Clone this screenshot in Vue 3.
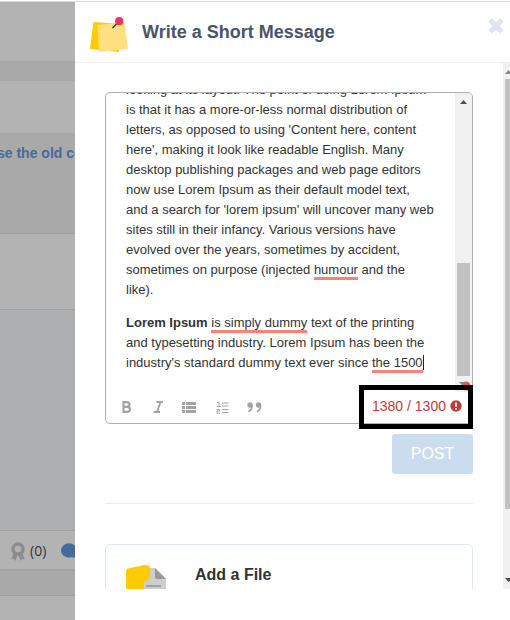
<script setup>
const lines = [
  'looking at its layout. The point of using Lorem Ipsum',
  'is that it has a more-or-less normal distribution of',
  "letters, as opposed to using 'Content here, content",
  "here', making it look like readable English. Many",
  'desktop publishing packages and web page editors',
  'now use Lorem Ipsum as their default model text,',
  "and a search for 'lorem ipsum' will uncover many web",
  'sites still in their infancy. Various versions have',
  'evolved over the years, sometimes by accident,',
]
</script>

<template>
  <div class="screen">
    <div class="topline"></div>
    <div class="columns">
      <aside class="backdrop">
        <div class="band b1"></div>
        <div class="band b2"></div>
        <div class="band b3"></div>
        <div class="band b4"><span class="link">se the old co</span></div>
        <div class="band b5"></div>
        <div class="band b6"></div>
        <div class="band b7">
          <svg class="award" width="14" height="19" viewBox="0 0 14 19">
            <path d="M3 11 0 17.200 2.600 16.800 4.200 19 6.500 13.500ZM11 11 14 17.200 11.400 16.800 9.800 19 7.500 13.500Z" fill="#8d8d8d" />
            <circle cx="7" cy="7" r="5" fill="none" stroke="#8d8d8d" stroke-width="3.500" />
          </svg>
          <span class="count">(0)</span>
          <svg class="chat" width="20" height="17" viewBox="0 0 20 17">
            <ellipse cx="8" cy="8.500" rx="8" ry="7.200" fill="#446b9c" />
            <path d="M12 11 16 15.500 11 15.500Z" fill="#446b9c" />
          </svg>
        </div>
        <div class="band b8"></div>
        <div class="band b9"></div>
      </aside>
      <section class="modal">
        <header class="head">
          <svg class="note" width="39" height="36" viewBox="0 0 39 36">
            <path d="M3.500 5 32 7 29 35 0 32Z" fill="#ffcb05" />
            <path d="M7.500 8 34.500 5.500 38 32 9 35Z" fill="#ffdf80" />
            <path d="M22.500 11 28 5.500" stroke="#333" stroke-width="1.500" />
            <circle cx="29.200" cy="4.200" r="4.100" fill="#eb3465" />
          </svg>
          <h1>Write a Short Message</h1>
          <svg class="close" width="16" height="16" viewBox="0 0 16 16">
            <path d="M2 2 14 14M14 2 2 14" stroke="#dfe4f2" stroke-width="4.600" />
          </svg>
        </header>
        <div class="body">
          <main class="content">
            <div class="editor">
              <div class="scroller">
                <div class="text">
                  <p>
                    <span v-for="l in lines" :key="l" class="line">{{ l }}</span>
                    <span class="line">sometimes on purpose (injected <u>humour</u> and the</span>
                    <span class="line">like).</span>
                  </p>
                  <p>
                    <span class="line"><b>Lorem Ipsum</b> <u>is simply dummy</u> text of the printing</span>
                    <span class="line">and typesetting industry. Lorem Ipsum has been the</span>
                    <span class="line">industry's standard dummy text ever since <u>the 1500</u><i class="caret"></i></span>
                  </p>
                </div>
                <div class="innerbar">
                  <svg class="up" width="7" height="4" viewBox="0 0 7 4"><path d="M0 4 3.500 0 7 4Z" fill="#505050" /></svg>
                  <div class="innerthumb"></div>
                  <svg class="down" width="12" height="10" viewBox="0 0 12 10">
                    <circle cx="8" cy="5" r="4.500" fill="#ec4b4b" />
                    <path d="M1 1H9L5 5Z" fill="#858585" />
                  </svg>
                </div>
              </div>
              <div class="tools">
                <svg width="150" height="14" viewBox="0 0 150 14" fill="none" stroke="#a3a3a3">
                  <path d="M2.500 2.200V11.800H5.800Q9 11.800 9 9.200 9 7 6 6.800 8.500 6.500 8.500 4.500 8.500 2.200 5.800 2.200ZM2.500 6.800H6" stroke-width="2.200" />
                  <path d="M35.500 2H42M32.500 12H39M39.500 2 36 12" stroke-width="1.900" />
                  <path d="M61 3.500H64M61 7.500H64M61 11.500H64M65 3.500H75M65 7.500H75M65 11.500H75" stroke-width="2.800" />
                  <path d="M96 2.500H98V6.500M96 6.500H100M95.500 9.500H98.500V11H96V13.200H99M101 3H107.500M101 6H107.500M101 9.500H107.500M101 12.500H107.500" stroke-width="1" />
                  <g fill="#a3a3a3" stroke="none">
                    <circle cx="129" cy="5" r="2.700" /><circle cx="137.500" cy="5" r="2.700" />
                  </g>
                  <path d="M131 5Q131 10 127.500 11.800M139.500 5Q139.500 10 136 11.800" stroke-width="1.800" />
                </svg>
              </div>
              <div class="limit">
                <span>1380 / 1300</span>
                <svg width="12" height="12" viewBox="0 0 12 12">
                  <circle cx="6" cy="6" r="5.700" fill="#bb3d3d" />
                  <path d="M6 2.500V6.700M6 7.900V9.500" stroke="#fff" stroke-width="1.700" />
                </svg>
              </div>
            </div>
            <button class="post">POST</button>
            <div class="rule"></div>
            <div class="card">
              <svg class="file" width="41" height="40" viewBox="0 0 41 40">
                <path d="M18 3H29L40 14V40H18Z" fill="#cecece" />
                <path d="M29 3 40 14H31Q29 14 29 12Z" fill="#999" />
                <path d="M20 21H35" stroke="#999" stroke-width="1.600" />
                <path d="M0 40V6Q0 4 2 3.500L17 .3Q24-.8 24 3V11Q24 14 21 15 18 16 18 19V40Z" fill="#ffcb05" />
              </svg>
              <h2>Add a File</h2>
            </div>
          </main>
          <div class="outerbar">
            <svg width="7" height="4" viewBox="0 0 7 4"><path d="M0 4 3.500 0 7 4Z" fill="#858585" /></svg>
            <div class="outerthumb"></div>
            <svg class="end" width="7" height="4" viewBox="0 0 7 4"><path d="M0 0H7L3.500 4Z" fill="#505050" /></svg>
          </div>
        </div>
      </section>
    </div>
  </div>
</template>

<style>
body { margin: 0; overflow: hidden; background: #fff; }
</style>

<style scoped>
* { box-sizing: border-box; }
.screen { width: 510px; height: 620px; overflow: hidden; font-family: "Liberation Sans", Arial, sans-serif; color: #333; }
.topline { height: 2px; border-bottom: 1px solid #d9dada; }
.columns { display: flex; height: 618px; }
.backdrop { width: 75px; overflow: hidden; flex: none; }
.band { background: #b3b3b3; white-space: nowrap; }
.b1 { height: 59px; }
.b2 { height: 20px; background: #a9a9a9; }
.b3 { height: 52px; }
.b4 { height: 101px; background: #a9a9a9; border-bottom: 1px solid #9fa0a1; padding-top: 12px; }
.link { font-size: 14px; line-height: 17px; font-weight: bold; color: #446b9c; display: block; margin-left: -3px; }
.b5 { height: 76px; border-bottom: 1px solid #9fa1a3; }
.b6 { height: 221px; background: #adafb1; border-bottom: 1px solid #9fa1a3; }
.b7 { height: 40px; border-bottom: 2px solid #a1a2a3; display: flex; padding: 11px 0 0 11px; }
.count { font: 14px/18px "Open Sans", sans-serif; margin-left: 5px; width: 31px; flex: none; }
.award, .chat { flex: none; }
.b8 { height: 25px; background: #a9a9a9; border-bottom: 1px solid #9fa0a1; }
.b9 { height: 24px; }
.modal { width: 435px; background: #fff; }
.head { height: 61px; border-bottom: 1px solid #efefef; display: flex; padding: 15px 6px 0 15px; }
.head h1 { margin: 4px 0 0 13px; font-size: 18px; line-height: 22px; color: #4a5469; flex: 1; white-space: nowrap; }
.close { margin-top: 1px; }
.body { height: 526px; display: flex; overflow: hidden; }
.content { width: 428px; padding: 29px 30px 0 30px; display: flex; flex-direction: column; flex: none; }
.editor { height: 332px; border: 1px solid #afafaf; border-radius: 5px; position: relative; flex: none; }
.scroller { height: 299px; display: flex; overflow: hidden; border-radius: 4px 4px 0 0; }
.text { width: 349px; padding-left: 20px; margin-top: -13px; flex: none; }
p { margin: 0 0 13px; }
.line { display: block; white-space: nowrap; font-size: 13px; line-height: 20px; }
u { text-decoration: none; border-bottom: 3px solid #fb8080; }
.caret { display: inline-block; width: 1px; height: 15px; background: #222; vertical-align: -3px; }
.innerbar { width: 17px; background: #f1f1f1; display: flex; flex-direction: column; align-items: center; flex: none; }
.up { margin-top: 7px; flex: none; }
.innerthumb { width: 13px; height: 113px; margin-top: 159px; background: #c1c1c1; flex: none; }
.down { margin-top: 5px; flex: none; }
.tools { height: 31px; padding: 8px 0 0 15px; }
.limit { position: absolute; left: 253px; top: 292px; width: 114px; height: 44px; border: 5px solid #000; display: flex; align-items: center; padding: 0 0 0 8px; font-size: 14px; color: #bb3d3d; white-space: nowrap; }
.limit span { width: 78px; margin-top: -2px; }
.limit svg { margin-top: -2px; }
.post { align-self: flex-end; width: 81px; height: 40px; margin-top: 10px; border: 0; border-radius: 3px; background: #cbdcee; color: #fff; font: 16px "Liberation Sans", Arial, sans-serif; padding: 0; flex: none; }
.rule { height: 1px; margin-top: 29px; background: #e9ebec; flex: none; }
.card { height: 90px; margin-top: 40px; border: 1px solid #dfe6ed; border-radius: 5px; display: flex; padding: 20px; flex: none; }
.card h2 { margin: 0 0 0 28px; font-size: 16px; line-height: 20px; }
.outerbar { width: 7px; background: #f1f1f1; display: flex; flex-direction: column; align-items: flex-end; }
.outerbar svg { margin: 7px -2px 0 0; flex: none; }
.outerthumb { width: 5px; height: 430px; margin-top: 5px; background: #c1c1c1; flex: none; }
.outerbar .end { margin-top: 69px; }
</style>
